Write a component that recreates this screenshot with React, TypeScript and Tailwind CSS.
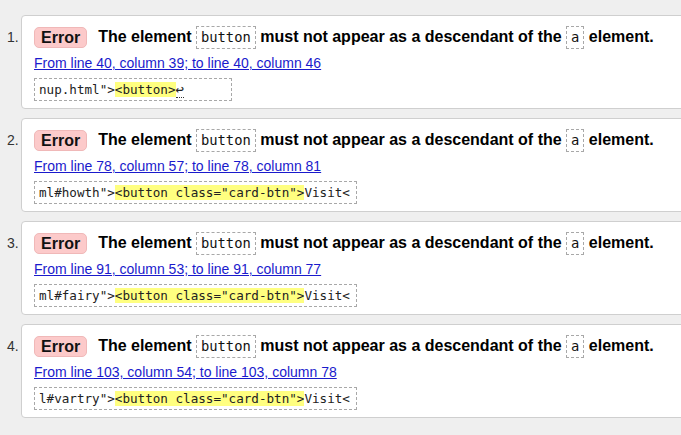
const errors = [
  {
    n: 1,
    loc: "From line 40, column 39; to line 40, column 46",
    pre: 'nup.html">',
    mark: "<button>",
    post: "",
    ret: true,
  },
  {
    n: 2,
    loc: "From line 78, column 57; to line 78, column 81",
    pre: 'ml#howth">',
    mark: '<button class="card-btn">',
    post: "Visit<",
    ret: false,
  },
  {
    n: 3,
    loc: "From line 91, column 53; to line 91, column 77",
    pre: 'ml#fairy">',
    mark: '<button class="card-btn">',
    post: "Visit<",
    ret: false,
  },
  {
    n: 4,
    loc: "From line 103, column 54; to line 103, column 78",
    pre: 'l#vartry">',
    mark: '<button class="card-btn">',
    post: "Visit<",
    ret: false,
  },
];

const sans = "font-['Liberation_Sans',Arial,sans-serif]";
const mono = "font-['DejaVu_Sans_Mono','Liberation_Mono',monospace]";

function Code({ children }: { children: string }) {
  return (
    <code
      className={`${mono} inline-block align-middle border border-dashed border-[#a8a8a8] px-[4px] text-[13.8px] leading-[21px] font-normal text-[#111]`}
    >
      {children}
    </code>
  );
}

function ErrorItem({ e }: { e: (typeof errors)[number] }) {
  return (
    <li className="flex mb-[9px]">
      <div className="w-[21px] shrink-0 pl-[7px] pt-[14px] text-[14px] leading-[16px] text-[#333]">
        {e.n}.
      </div>
      <div className="w-[700px] shrink-0 h-[94px] bg-white border border-[#cfcfcf] rounded-[4px] px-[12px] pt-[7px]">
        <div className="h-[28px] leading-[28px] whitespace-nowrap text-[16px] font-bold text-black">
          <span className="inline-block align-middle bg-[#fccaca] border border-[#f0b8b8] rounded-[5px] px-[6px] leading-[19px] text-[#111]">
            Error
          </span>
          <span className="ml-[11px]">The element </span>
          <Code>button</Code>
          <span> must not appear as a descendant of the </span>
          <Code>a</Code>
          <span> element.</span>
        </div>
        <div className="mt-[4px] h-[16px] leading-[16px] text-[14px] whitespace-nowrap">
          <a className="text-[#1a1acc] underline">{e.loc}</a>
        </div>
        <div className="mt-[7px] flex">
          <div
            className={`${mono} border border-dashed border-[#a8a8a8] pl-[4px] pr-[6px] py-[2px] text-[12.6px] leading-[17px] text-[#222] whitespace-pre`}
          >
            {e.pre}
            <mark className="bg-[#ffff80] text-[#222]">{e.mark}</mark>
            {e.post}
            {e.ret && (
              <span className="border-b border-dotted border-[#333] text-[14px]">↩</span>
            )}
            {e.ret && <span className="inline-block w-[41px]" />}
          </div>
        </div>
      </div>
    </li>
  );
}

export default function App() {
  return (
    <div className={`${sans} w-[681px] h-[435px] overflow-hidden bg-[#efefef]`}>
      <ol className="pt-[15px]">
        {errors.map((e) => (
          <ErrorItem key={e.n} e={e} />
        ))}
      </ol>
    </div>
  );
}
